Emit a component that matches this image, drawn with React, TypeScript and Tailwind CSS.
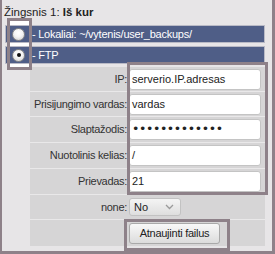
import React from "react";

const font = { fontFamily: '"Liberation Sans", Arial, sans-serif' };

function Radio({ checked }: { checked?: boolean }) {
  return (
    <div className="w-[13px] h-[13px] rounded-full border border-[#8a8a8a] bg-[radial-gradient(circle_at_50%_35%,#ffffff_0%,#f4f4f4_45%,#c8c8c8_100%)] flex items-center justify-center shrink-0">
      {checked && <div className="w-[4px] h-[4px] rounded-full bg-[#111]" />}
    </div>
  );
}

function Row({ label, h, children, last }: { label: string; h: string; children: React.ReactNode; last?: boolean }) {
  return (
    <div className={`flex items-center ${h} ${last ? "" : "border-b border-[#e9e8e9]"}`}>
      <div className="w-[98px] text-right text-[11px] tracking-[-0.3px] text-[#333] pr-[1px] shrink-0 whitespace-nowrap">{label}</div>
      <div className="flex-1 flex items-center pl-[1px]">{children}</div>
    </div>
  );
}

function Input({ value, password }: { value: string; password?: boolean }) {
  return (
    <div className="w-[132px] h-[21px] bg-white border border-[#c4c4c4] rounded-[3px] flex items-center pl-[2px] text-[11px] text-[#222] overflow-hidden whitespace-nowrap">
      {password ? (
        <span style={{ fontFamily: '"DejaVu Sans", sans-serif', fontSize: "12.5px", letterSpacing: "-0.4px" }}>{value}</span>
      ) : (
        value
      )}
    </div>
  );
}

export default function App() {
  return (
    <div className="relative w-[275px] h-[254px] bg-[#e7e5e7] border-l-2 border-r-[3px] border-b-[3px] border-[#8e8189] overflow-hidden" style={font}>
      <div className="h-[25px] pl-[2px] pt-[5px] text-[11.5px] text-[#222] leading-[14px]">
        Žingsnis 1: <b>Iš kur</b>
      </div>

      {/* white fill behind radio column highlight */}
      <div className="absolute left-[8px] top-[21px] w-[19px] h-[46px] bg-white" />

      <div className="relative ml-[3px] w-[260px] flex flex-col gap-[3px]">
        <div className="h-[18px] bg-[#4f5e87] border border-[#b9bac6] flex items-center text-white text-[11px] tracking-[-0.25px] whitespace-nowrap">
          <div className="ml-[6px] mr-[7px]"><Radio /></div>
          <span>- Lokaliai: ~/vytenis/user_backups/</span>
        </div>
        <div className="h-[18px] bg-[#4f5e87] border border-[#b9bac6] flex items-center text-white text-[11px] tracking-[-0.25px] whitespace-nowrap">
          <div className="ml-[6px] mr-[7px]"><Radio checked /></div>
          <span>- FTP</span>
        </div>
      </div>

      <div className="ml-[28px] mt-[3px] w-[235px] bg-[#d6d5d6] flex flex-col">
        <Row label="IP:" h="h-[25px]"><Input value="serverio.IP.adresas" /></Row>
        <Row label="Prisijungimo vardas:" h="h-[25px]"><Input value="vardas" /></Row>
        <Row label="Slaptažodis:" h="h-[26px]"><Input value="•••••••••••••" password /></Row>
        <Row label="Nuotolinis kelias:" h="h-[26px]"><Input value="/" /></Row>
        <Row label="Prievadas:" h="h-[26px]"><Input value="21" /></Row>
        <Row label="none:" h="h-[25px]">
          <div className="w-[52px] h-[18px] rounded-[3px] border border-[#c2c2c2] bg-[linear-gradient(#f4f4f4,#dedede)] flex items-center justify-between pl-[4px] pr-[6px] text-[11px] text-[#222]">
            <span>No</span>
            <svg width="9" height="6" viewBox="0 0 9 6"><path d="M1 1 L4.5 4.5 L8 1" fill="none" stroke="#9a9a9a" strokeWidth="1.3" /></svg>
          </div>
        </Row>
        <Row label="" h="h-[26px]" last>
          <div className="w-[91px] h-[21px] rounded-[3px] border border-[#a9a9a9] bg-[linear-gradient(#f8f8f8,#dcdcdc)] flex items-center justify-center text-[11px] tracking-[-0.25px] text-[#222] whitespace-nowrap">
            Atnaujinti failus
          </div>
        </Row>
      </div>

      {/* highlight overlays */}
      <div className="absolute left-[5px] top-[18px] w-[25px] h-[52px] border-[3px] border-[#8e8189] pointer-events-none" />
      <div className="absolute left-[125px] top-[62px] w-[141px] h-[133px] border-[3px] border-[#8e8189] pointer-events-none" />
      <div className="absolute left-[122px] top-[219px] w-[106px] h-[32px] border-[3px] border-[#8e8189] pointer-events-none" />
    </div>
  );
}
